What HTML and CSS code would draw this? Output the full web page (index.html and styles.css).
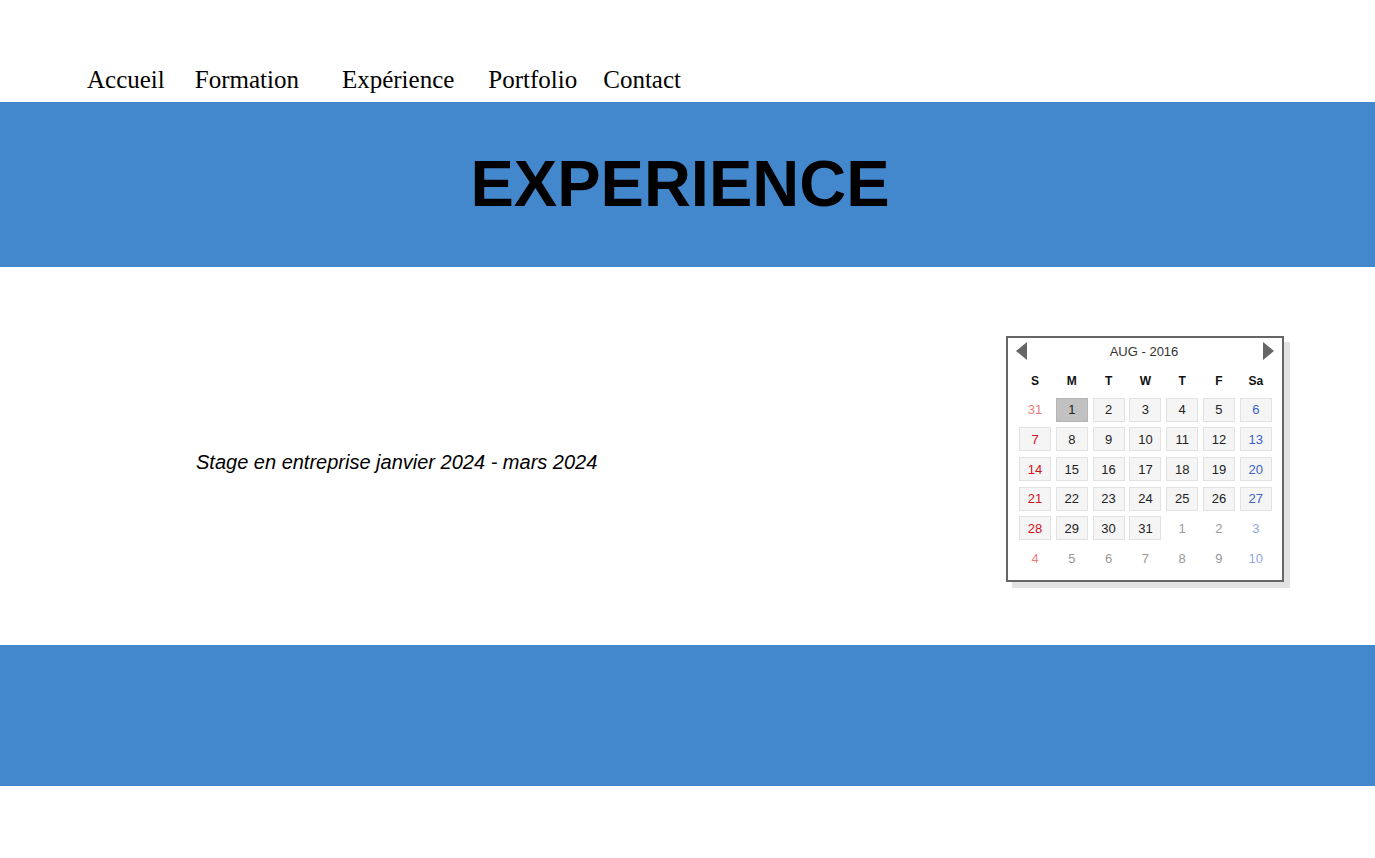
FILE: index.html
```html
<!DOCTYPE html>
<html lang="fr">
<head>
<meta charset="utf-8">
<title>Expérience</title>
<link rel="stylesheet" href="styles.css">
</head>
<body>
<nav class="nav">
  <a class="nav-link nav-accueil" href="#">Accueil</a>
  <a class="nav-link nav-formation" href="#">Formation</a>
  <a class="nav-link nav-experience" href="#">Expérience</a>
  <a class="nav-link nav-portfolio" href="#">Portfolio</a>
  <a class="nav-link nav-contact" href="#">Contact</a>
</nav>
<header class="banner">
  <h1 class="banner-title">EXPERIENCE</h1>
</header>
<main class="content">
  <p class="stage">Stage en entreprise janvier 2024 - mars 2024</p>
  <div class="calendar">
    <div class="cal-head">
      <span class="cal-arrow cal-prev"></span>
      <span class="cal-title">AUG - 2016</span>
      <span class="cal-arrow cal-next"></span>
    </div>
    <div class="cal-grid">
      <span class="dow">S</span><span class="dow">M</span><span class="dow">T</span><span class="dow">W</span><span class="dow">T</span><span class="dow">F</span><span class="dow">Sa</span>

      <span class="day other sun">31</span><span class="day cur sel">1</span><span class="day cur">2</span><span class="day cur">3</span><span class="day cur">4</span><span class="day cur">5</span><span class="day cur sat">6</span>

      <span class="day cur sun">7</span><span class="day cur">8</span><span class="day cur">9</span><span class="day cur">10</span><span class="day cur">11</span><span class="day cur">12</span><span class="day cur sat">13</span>

      <span class="day cur sun">14</span><span class="day cur">15</span><span class="day cur">16</span><span class="day cur">17</span><span class="day cur">18</span><span class="day cur">19</span><span class="day cur sat">20</span>

      <span class="day cur sun">21</span><span class="day cur">22</span><span class="day cur">23</span><span class="day cur">24</span><span class="day cur">25</span><span class="day cur">26</span><span class="day cur sat">27</span>

      <span class="day cur sun">28</span><span class="day cur">29</span><span class="day cur">30</span><span class="day cur">31</span><span class="day other">1</span><span class="day other">2</span><span class="day other sat">3</span>

      <span class="day other sun">4</span><span class="day other">5</span><span class="day other">6</span><span class="day other">7</span><span class="day other">8</span><span class="day other">9</span><span class="day other sat">10</span>
    </div>
  </div>
</main>
<footer class="footer"></footer>
</body>
</html>
```

FILE: styles.css
```css
* { box-sizing: border-box; }

body {
  margin: 0;
  background: #ffffff;
  font-family: "Liberation Serif", "Times New Roman", serif;
  color: #000;
}

.nav {
  height: 102px;
  display: flex;
  align-items: flex-end;
  padding: 0 0 8px 87px;
}

.nav-link {
  font-family: "Liberation Serif", "Times New Roman", serif;
  font-size: 25px;
  color: #000;
  text-decoration: none;
  line-height: 28px;
}

.nav-formation { margin-left: 30px; }
.nav-experience { margin-left: 43px; }
.nav-portfolio { margin-left: 34px; }
.nav-contact { margin-left: 26px; }

.banner {
  height: 165px;
  background: #4387cc;
  display: flex;
  align-items: center;
  justify-content: center;
  padding: 0 15px 3px 0;
}

.banner-title {
  margin: 0;
  font-family: "Liberation Sans", Arial, sans-serif;
  font-weight: bold;
  font-size: 65px;
  line-height: 1;
  color: #000;
}

.content {
  height: 378px;
  display: flex;
  justify-content: space-between;
  align-items: flex-start;
  padding: 69px 91px 0 196px;
}

.stage {
  margin: 114px 0 0;
  font-family: "Liberation Sans", Arial, sans-serif;
  font-style: italic;
  font-size: 20px;
  line-height: 24px;
}

.calendar {
  width: 278px;
  height: 246px;
  border: 2px solid #666;
  background: #fff;
  box-shadow: 6px 6px 0 #e2e2e2;
  font-family: "Liberation Sans", Arial, sans-serif;
  padding: 2px 10px 0 11px;
}

.cal-head {
  height: 22px;
  display: flex;
  align-items: center;
  justify-content: space-between;
  margin: 0 -2px 0 -3px;
}

.cal-title {
  font-size: 13px;
  color: #333;
  padding-right: 2px;
}

.cal-arrow {
  width: 0;
  height: 0;
  border-top: 9px solid transparent;
  border-bottom: 9px solid transparent;
}

.cal-prev { border-right: 11px solid #666; }
.cal-next { border-left: 11px solid #666; }

.cal-grid {
  display: grid;
  grid-template-columns: repeat(7, 32px);
  grid-template-rows: 28px repeat(6, 24px);
  column-gap: 4.8px;
  row-gap: 5.7px;
  margin-top: 2px;
}

.dow {
  font-size: 12px;
  font-weight: bold;
  color: #111;
  display: flex;
  align-items: center;
  justify-content: center;
  margin-bottom: -6px;
}

.day {
  font-size: 13px;
  display: flex;
  align-items: center;
  justify-content: center;
  border: 1px solid transparent;
  color: #222;
}

.day.cur {
  background: #f5f5f5;
  border-color: #e2e2e2;
}

.day.sel {
  background: #c1c1c1;
  border-color: #b5b5b5;
}

.day.cur.sun { color: #d0101a; }
.day.cur.sat { color: #3a63c4; }

.day.other { color: #999; }
.day.other.sun { color: #ec7c7c; }
.day.other.sat { color: #93a8dd; }

.footer {
  height: 141px;
  background: #4387cc;
}
```
